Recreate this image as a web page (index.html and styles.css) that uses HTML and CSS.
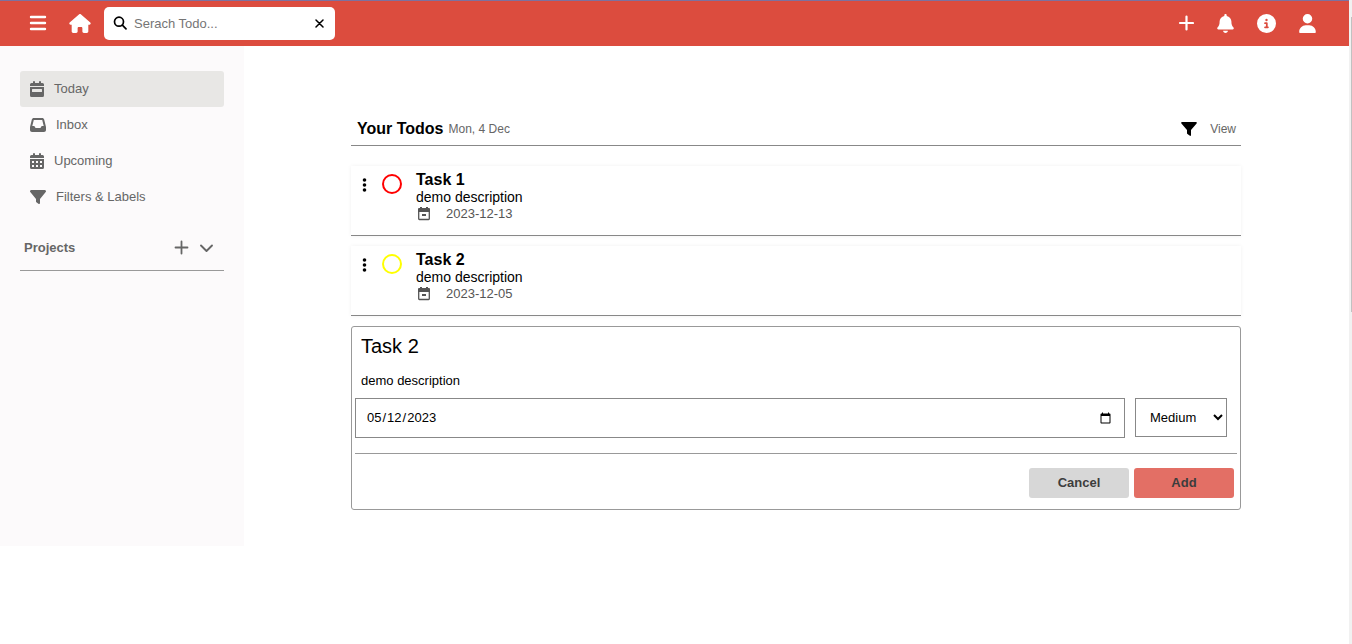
FILE: index.html
```html
<!DOCTYPE html>
<html lang="en">
<head>
<meta charset="utf-8">
<title>Todos</title>
<link rel="stylesheet" href="styles.css">
</head>
<body>
<div class="page">
<header class="topbar">
  <div class="topbar-group">
    <button class="icon-btn menu-btn" aria-label="Menu"><svg width="18" height="17" viewBox="0 0 18 17"><path d="M2 2h14M2 8h14M2 14h14" fill="none" stroke="currentColor" stroke-width="2.400" stroke-linecap="round"/></svg></button>
    <a class="icon-btn" href="#" aria-label="Home"><svg width="22" height="19" viewBox="0 0 576 512"><path fill="currentColor" d="M575.800 255.500c0 18-15 32.100-32 32.100h-32l.7 160.200c0 2.700-.2 5.400-.5 8.100V472c0 22.100-17.900 40-40 40H392c-22.100 0-40-17.900-40-40v-88c0-17.700-14.300-32-32-32h-64c-17.700 0-32 14.300-32 32v88c0 22.100-17.900 40-40 40h-80c-22.100 0-40-17.900-40-40V287.600H32c-18 0-32-14-32-32.100 0-9 3-17 10-24L266.400 8c7-7 15-8 22-8s15 2 21 7l255.400 224.500c8 7 12 15 11 24z"/></svg></a>
    <form class="search">
      <svg width="14" height="15" viewBox="0 0 14 15"><g fill="none" stroke="currentColor" stroke-width="1.700" stroke-linecap="round"><circle cx="6" cy="5.700" r="4.500"/><path d="M9.400 9.200L13 12.800"/></g></svg>
      <input class="search-input" type="text" placeholder="Serach Todo..." aria-label="Search todo">
      <button class="icon-btn" type="button" aria-label="Clear"><svg width="9" height="9" viewBox="0 0 9 9"><path d="M1 1l7 7M8 1L1 8" stroke="currentColor" stroke-width="1.500" stroke-linecap="round"/></svg></button>
    </form>
  </div>
  <div class="topbar-group topbar-actions">
    <button class="icon-btn" aria-label="Add task"><svg width="16" height="17" viewBox="0 0 16 17"><path d="M8.500 1.500v13M2 8h13" stroke="currentColor" stroke-width="2.200" stroke-linecap="round"/></svg></button>
    <button class="icon-btn" aria-label="Notifications"><svg width="17" height="19" viewBox="0 0 448 512"><path fill="currentColor" d="M224 0c-17.700 0-32 14.300-32 32v19.200C119 66 64 130.600 64 208v18.800c0 47-17.300 92.400-48.500 127.600l-7.400 8.300c-8.400 9.400-10.400 22.900-5.300 34.400S19.400 416 32 416h384c12.600 0 24-7.400 29.200-18.900s3.100-25-5.300-34.400l-7.400-8.300C401.300 319.200 384 273.900 384 226.800V208c0-77.400-55-142-128-156.800V32c0-17.700-14.300-32-32-32zm45.300 493.300c12-12 18.700-28.300 18.700-45.300H160c0 17 6.700 33.300 18.700 45.300S207 512 224 512s33.300-6.700 45.300-18.700z"/></svg></button>
    <button class="icon-btn" aria-label="Information"><svg width="19" height="19" viewBox="0 0 512 512"><path fill="currentColor" d="M256 512a256 256 0 1 0 0-512 256 256 0 1 0 0 512zm-40-176h24v-64h-24c-13.300 0-24-10.700-24-24s10.700-24 24-24h48c13.300 0 24 10.700 24 24v88h8c13.300 0 24 10.700 24 24s-10.700 24-24 24h-80c-13.300 0-24-10.700-24-24s10.700-24 24-24zm40-208a32 32 0 1 1 0 64 32 32 0 1 1 0-64z"/></svg></button>
    <button class="icon-btn" aria-label="Account"><svg width="17" height="19" viewBox="0 0 448 512"><path fill="currentColor" d="M224 256a128 128 0 1 0 0-256 128 128 0 1 0 0 256zm-45.700 48C79.800 304 0 383.800 0 482.300 0 498.700 13.300 512 29.700 512h388.600c16.400 0 29.700-13.300 29.700-29.700C448 383.800 368.200 304 269.700 304h-91.400z"/></svg></button>
  </div>
</header>

<div class="layout">
<aside class="sidebar">
  <nav class="nav">
    <a class="nav-link active" href="#"><svg width="14" height="16" viewBox="0 0 14 16"><path fill="currentColor" fill-rule="evenodd" d="M3 1a1 1 0 0 1 2 0v1h4V1a1 1 0 0 1 2 0v1h1.500A1.500 1.500 0 0 1 14 3.500V5H0V3.500A1.500 1.500 0 0 1 1.500 2H3zM0 6h14v8.500a1.500 1.500 0 0 1-1.500 1.500h-11A1.500 1.500 0 0 1 0 14.500zM2.500 8a.5.5 0 0 0-.5.5v2a.5.5 0 0 0 .5.5h9a.5.5 0 0 0 .5-.5v-2a.5.5 0 0 0-.5-.5z"/></svg>Today</a>
    <a class="nav-link" href="#"><svg width="16" height="16" viewBox="0 0 512 512"><path fill="currentColor" d="M121 32c-29.400 0-55 20-62.100 48.500L1.900 308.700C.6 313.800 0 319 0 324.200V416c0 35.300 28.700 64 64 64h384c35.300 0 64-28.700 64-64v-91.800c0-5.200-.6-10.400-1.900-15.500L453.100 80.500C446 52 420.400 32 391 32H121zm0 64h270l48 192h-51.200c-12.100 0-23.200 6.800-28.600 17.700l-14.300 28.600c-5.400 10.800-16.500 17.700-28.600 17.700H195.800c-12.100 0-23.200-6.800-28.600-17.700l-14.300-28.600c-5.400-10.800-16.500-17.700-28.600-17.700H73l48-192z"/></svg>Inbox</a>
    <a class="nav-link" href="#"><svg width="14" height="16" viewBox="0 0 14 16"><path fill="currentColor" fill-rule="evenodd" d="M3 1a1 1 0 0 1 2 0v1h4V1a1 1 0 0 1 2 0v1h1.500A1.500 1.500 0 0 1 14 3.500V5H0V3.500A1.500 1.500 0 0 1 1.500 2H3zM0 6h14v8.500a1.500 1.500 0 0 1-1.500 1.500h-11A1.500 1.500 0 0 1 0 14.500zM2 8v2h2V8zM6 8v2h2V8zM10 8v2h2V8zM2 12v2h2v-2zM6 12v2h2v-2zM10 12v2h2v-2z"/></svg>Upcoming</a>
    <a class="nav-link" href="#"><svg width="16" height="16" viewBox="0 0 512 512"><path fill="currentColor" d="M3.900 54.900C10.500 40.900 24.500 32 40 32h432c15.500 0 29.500 8.900 36.100 22.900s4.600 30.500-5.200 42.500L320 320.900V448c0 12.100-6.800 23.200-17.700 28.600s-23.800 4.300-33.500-3l-64-48c-8.100-6-12.800-15.500-12.800-25.600v-79.100L9 97.300C-.7 85.400-2.800 68.800 3.900 54.900z"/></svg>Filters &amp; Labels</a>
  </nav>
  <div class="projects">
    <span class="projects-title">Projects</span>
    <button class="icon-btn" aria-label="Add project"><svg width="15" height="15" viewBox="0 0 15 15"><path d="M7.500 1.500v12M1.500 7.500h12" stroke="currentColor" stroke-width="1.800" stroke-linecap="round"/></svg></button>
    <button class="icon-btn" aria-label="Expand projects"><svg width="16" height="16" viewBox="0 0 16 16"><path d="M2 5.500l5.500 5.500L13 5.500" fill="none" stroke="currentColor" stroke-width="1.900" stroke-linecap="round" stroke-linejoin="round"/></svg></button>
  </div>
</aside>

<main class="main">
  <div class="heading">
    <h1 class="title">Your Todos</h1>
    <span class="muted">Mon, 4 Dec</span>
    <button class="view-btn muted"><svg width="16" height="16" viewBox="0 0 16 16"><path fill="#000" d="M1 1h14c.8 0 1.100.8.600 1.400L10 9v5.200c0 .6-.6.9-1.100.6L6.500 13a1 1 0 0 1-.5-.8V9L.4 2.400C-.1 1.800.2 1 1 1z"/></svg>View</button>
  </div>

  <ul class="tasks">
    <li class="task">
      <button class="icon-btn dots" aria-label="Task options"><svg width="5" height="14" viewBox="0 0 5 14"><g fill="currentColor"><circle cx="2.500" cy="2" r="1.800"/><circle cx="2.500" cy="7" r="1.800"/><circle cx="2.500" cy="12" r="1.800"/></g></svg></button>
      <input class="check high" type="checkbox" aria-label="Complete Task 1">
      <div class="task-body">
        <h2 class="task-title">Task 1</h2>
        <p class="task-text">demo description</p>
        <p class="task-date"><svg width="12" height="14" viewBox="0 0 12 14"><path d="M.7 4v7.800a.7.700 0 0 0 .7.700h9.200a.7.700 0 0 0 .7-.7V4" fill="none" stroke="currentColor" stroke-width="1.300"/><path fill="currentColor" d="M1 1h1V0h2v1h4V0h2v1h1a1 1 0 0 1 1 1v3H0V2a1 1 0 0 1 1-1zM4 7h4v2H4z"/></svg>2023-12-13</p>
      </div>
    </li>
    <li class="task">
      <button class="icon-btn dots" aria-label="Task options"><svg width="5" height="14" viewBox="0 0 5 14"><g fill="currentColor"><circle cx="2.500" cy="2" r="1.800"/><circle cx="2.500" cy="7" r="1.800"/><circle cx="2.500" cy="12" r="1.800"/></g></svg></button>
      <input class="check medium" type="checkbox" aria-label="Complete Task 2">
      <div class="task-body">
        <h2 class="task-title">Task 2</h2>
        <p class="task-text">demo description</p>
        <p class="task-date"><svg width="12" height="14" viewBox="0 0 12 14"><path d="M.7 4v7.800a.7.700 0 0 0 .7.700h9.200a.7.700 0 0 0 .7-.7V4" fill="none" stroke="currentColor" stroke-width="1.300"/><path fill="currentColor" d="M1 1h1V0h2v1h4V0h2v1h1a1 1 0 0 1 1 1v3H0V2a1 1 0 0 1 1-1zM4 7h4v2H4z"/></svg>2023-12-05</p>
      </div>
    </li>
  </ul>

  <form class="editor">
    <input class="field-title" type="text" value="Task 2" aria-label="Title">
    <input class="field-text" type="text" value="demo description" aria-label="Description">
    <div class="field-row">
      <input class="field-date" type="date" value="2023-05-12" aria-label="Due date">
      <select class="field-priority" aria-label="Priority"><option>Low</option><option selected>Medium</option><option>High</option></select>
    </div>
    <div class="editor-actions">
      <button class="btn" type="button">Cancel</button>
      <button class="btn btn-add" type="button">Add</button>
    </div>
  </form>
</main>
</div>
</div>
<div class="scroll-track"><div class="scroll-thumb"></div></div>
</body>
</html>
```
FILE: styles.css
```css
* { box-sizing: border-box; }
body {
  margin: 0;
  display: flex;
  min-height: 100vh;
  background: #fff;
  color: #000;
  font: 13px/18px "Liberation Sans", Arial, sans-serif;
}
button, input, select { font: inherit; color: inherit; }
h1, h2, p, ul { margin: 0; padding: 0; }
svg { display: block; flex: none; }

.page { flex: 1; min-width: 0; }
.scroll-track { width: 3px; background: #f1f1f1; padding: 17px 0 0 2px; }
.scroll-thumb { height: 295px; background: #c1c1c1; }

.icon-btn {
  display: flex;
  padding: 0;
  border: 0;
  background: none;
  color: inherit;
}

.topbar {
  display: flex;
  align-items: center;
  justify-content: space-between;
  height: 46px;
  padding: 0 33px 0 29px;
  border-top: 1px solid #7d719f;
  background: #dc4c3e;
  color: #fff;
}
.topbar-group { display: flex; align-items: center; }
.menu-btn { margin-right: 22px; }
.topbar-actions { gap: 23px; }
.search {
  display: flex;
  align-items: center;
  width: 231px;
  height: 33px;
  margin-left: 13px;
  padding: 0 11px 0 9px;
  border-radius: 5px;
  background: #fff;
  color: #000;
}
.search-input {
  flex: 1;
  min-width: 0;
  padding: 0 7px;
  border: 0;
  outline: 0;
  background: none;
}
.search-input::placeholder { color: #757575; }

.layout { display: flex; align-items: flex-start; }
.sidebar {
  width: 244px;
  min-height: 500px;
  padding: 25px 20px;
  background: #fcfafb;
  color: #666;
}
.nav-link {
  display: flex;
  align-items: center;
  gap: 10px;
  height: 36px;
  padding: 0 10px;
  border-radius: 3px;
  color: inherit;
  text-decoration: none;
}
.nav-link.active { background: #e8e7e5; }
.projects {
  display: flex;
  align-items: center;
  gap: 10px;
  height: 46px;
  margin-top: 10px;
  padding: 0 9px 0 4px;
  border-bottom: 1px solid #999;
}
.projects-title { flex: 1; font-weight: bold; }

.main { flex: 1; min-width: 0; padding: 66px 108px 40px 107px; }
.heading {
  display: flex;
  align-items: center;
  gap: 5px;
  height: 34px;
  padding: 0 5px 0 6px;
  border-bottom: 1px solid #888;
}
.title { font-size: 16px; }
.muted { color: #666; font-size: 12px; }
.view-btn {
  display: flex;
  align-items: center;
  gap: 13px;
  margin-left: auto;
  padding: 0;
  border: 0;
  background: none;
}

.tasks { display: grid; gap: 10px; margin: 20px 0 10px; list-style: none; }
.task {
  display: flex;
  align-items: flex-start;
  height: 70px;
  padding: 5px 11px;
  border-bottom: 1px solid #888;
  box-shadow: 0 0 4px rgba(0, 0, 0, .06);
}
.dots { margin-top: 7px; }
.check {
  appearance: none;
  width: 20px;
  height: 20px;
  margin: 3px 14px 0 15px;
  border: 2px solid;
  border-radius: 50%;
}
.high { border-color: #f00; }
.medium { border-color: #ff0; }
.task-title { font-size: 16px; line-height: 18px; }
.task-text { font-size: 14px; line-height: 16px; }
.task-date {
  display: flex;
  align-items: center;
  gap: 16px;
  padding-left: 2px;
  line-height: 18px;
  color: #555;
}

.editor {
  padding: 3px;
  border: 1px solid #999;
  border-radius: 3px;
}
.field-title, .field-text {
  display: block;
  width: 100%;
  padding: 0 6px;
  border: 0;
  outline: 0;
  background: none;
}
.field-title { height: 32px; font-size: 20px; }
.field-text { height: 36px; }
.field-row {
  display: flex;
  gap: 10px;
  padding-right: 10px;
}
.field-date {
  flex: 1;
  min-width: 0;
  height: 40px;
  padding: 0 10px;
  border: 1px solid #888;
  border-radius: 0;
  background: #fff;
}
.field-priority {
  width: 92px;
  height: 39px;
  padding: 0 0 0 10px;
  border: 1px solid #888;
  border-radius: 0;
  background: #fff;
}
.editor-actions {
  display: flex;
  justify-content: flex-end;
  gap: 5px;
  margin-top: 15px;
  padding: 14px 3px 8px;
  border-top: 1px solid #999;
}
.btn {
  width: 100px;
  height: 30px;
  border: 0;
  border-radius: 3px;
  background: #d7d7d7;
  color: #3d3d3d;
  font-weight: bold;
}
.btn-add { background: #e36f65; }
```
